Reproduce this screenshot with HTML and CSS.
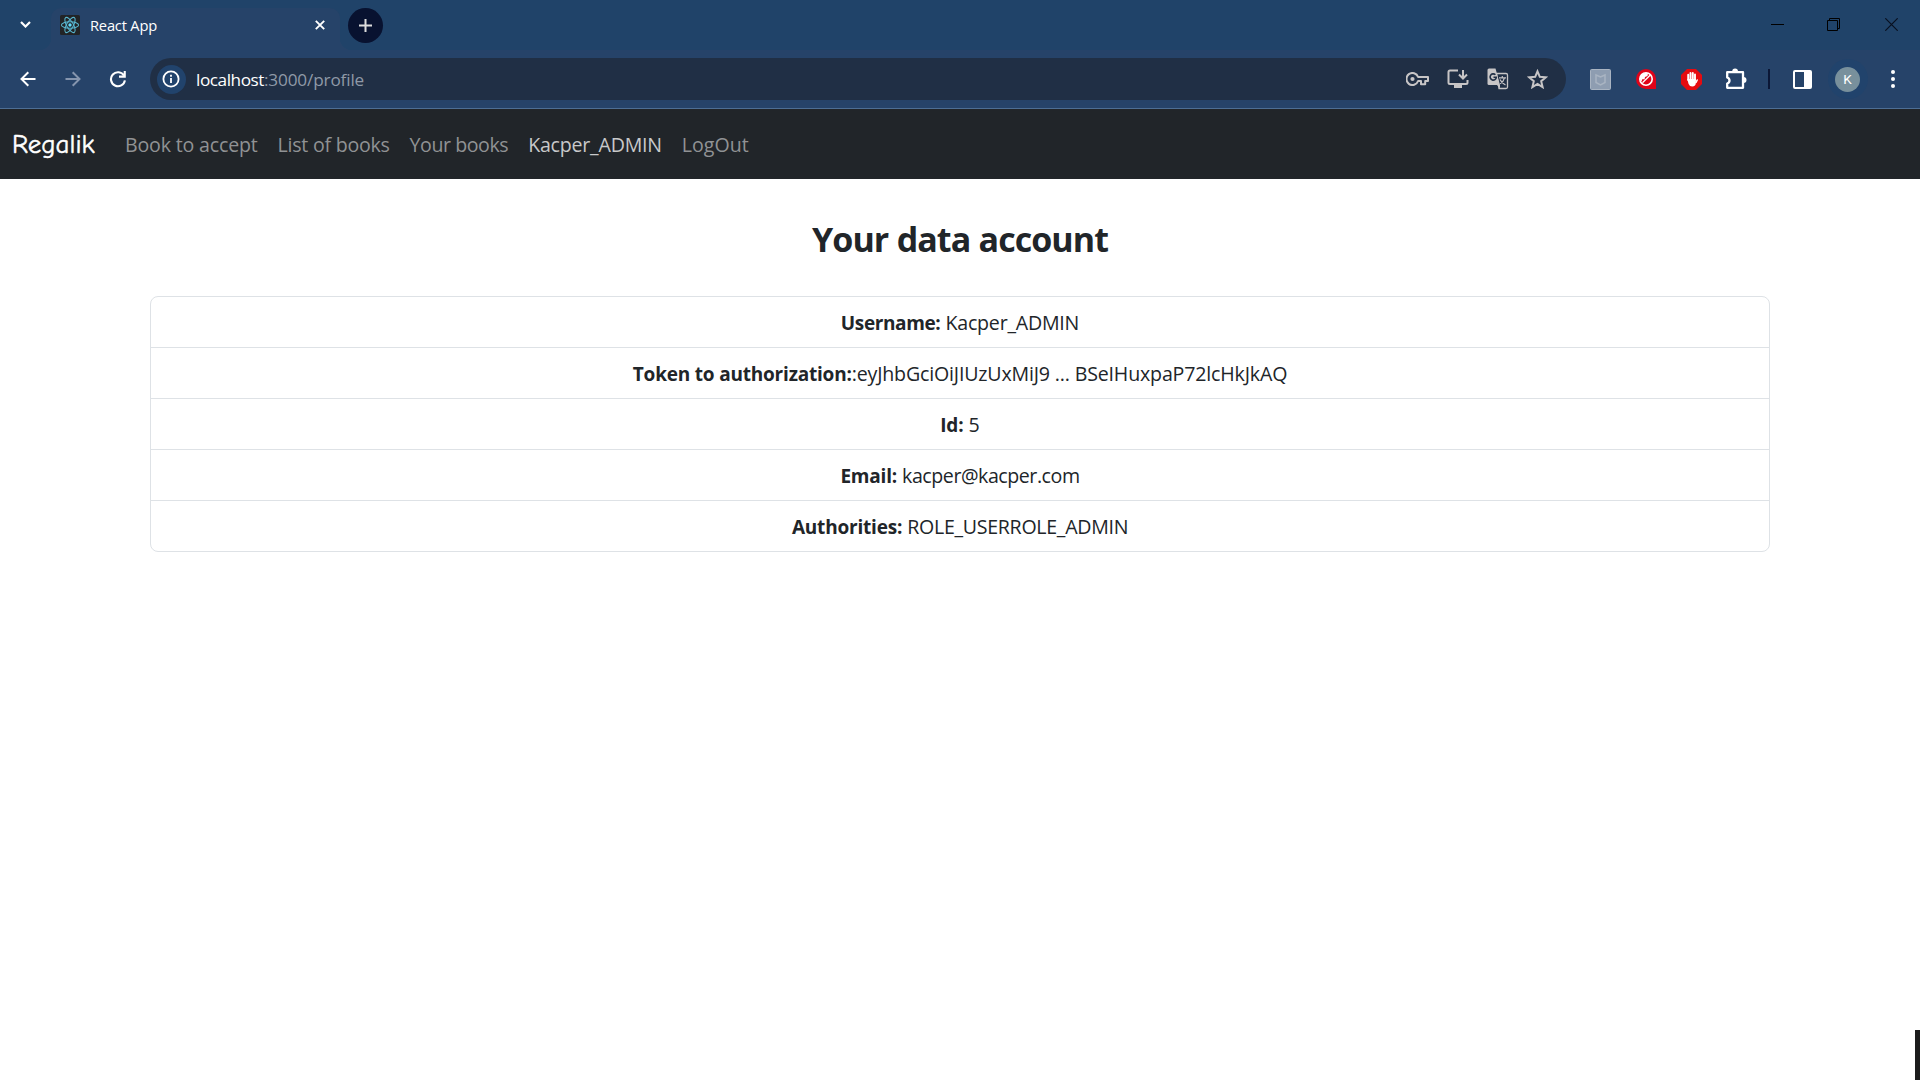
FILE: index.html
```html
<!DOCTYPE html>
<html lang="en">
<head>
<meta charset="utf-8">
<title>React App</title>
<link rel="stylesheet" href="styles.css">
</head>
<body>
<header class="browser">
  <div class="tabstrip">
    <button class="tab-search" aria-label="Search tabs"><svg width="11" height="7" viewBox="0 0 11 7"><path d="M1 1l4.500 4.500L10 1" fill="none" stroke="#fff" stroke-width="2.200"/></svg></button>
    <div class="tab">
      <svg class="favicon" width="20" height="20" viewBox="0 0 20 20"><rect width="20" height="20" rx="1.500" fill="#222426"/><g fill="none" stroke="#58b6cf" stroke-width="1.050"><ellipse cx="10" cy="10" rx="8.600" ry="3.300"/><ellipse cx="10" cy="10" rx="8.600" ry="3.300" transform="rotate(60 10 10)"/><ellipse cx="10" cy="10" rx="8.600" ry="3.300" transform="rotate(120 10 10)"/></g><circle cx="10" cy="10" r="1.700" fill="#61dafb"/></svg>
      <span class="tab-title">React App</span>
      <svg class="tab-close" width="10" height="10" viewBox="0 0 10 10"><path d="M.8.8l8.400 8.400M9.200.8L.8 9.200" stroke="#fff" stroke-width="1.900"/></svg>
    </div>
    <button class="new-tab" aria-label="New tab"><svg width="13" height="13" viewBox="0 0 13 13"><path d="M6.500 0v13M0 6.500h13" stroke="#ddd" stroke-width="2"/></svg></button>
    <div class="window-controls">
      <svg width="13" height="13" viewBox="0 0 13 13"><path d="M0 6.500h13" stroke="#000"/></svg>
      <svg width="13" height="13" viewBox="0 0 13 13"><path d="M.5 2.500h10v10H.5zM2.500 2.500v-2h10v10h-2" fill="none" stroke="#000"/></svg>
      <svg width="13" height="13" viewBox="0 0 13 13"><path d="M.3.3l12.400 12.400M12.700.3L.3 12.700" stroke="#081020" stroke-width="1.200"/></svg>
    </div>
  </div>
  <div class="toolbar">
    <div class="slots">
      <svg width="16" height="16" viewBox="0 0 16 16"><path d="M15.500 8H2M8.300 1.200L1.500 8l6.800 6.800" fill="none" stroke="#fff" stroke-width="2"/></svg>
      <svg width="16" height="16" viewBox="0 0 16 16"><path d="M.5 8H14M7.700 1.200L14.500 8l-6.800 6.800" fill="none" stroke="#8595ae" stroke-width="2"/></svg>
      <svg width="18" height="18" viewBox="0 0 18 18"><path d="M15 5.600A7 7 0 1 0 15.900 10.300" fill="none" stroke="#fff" stroke-width="2.100"/><path d="M16.800 1v6.700H10V5.600h4.700V1z" fill="#fff"/></svg>
    </div>
    <div class="omnibox">
      <span class="site-info"><svg width="18" height="18" viewBox="0 0 18 18"><circle cx="9" cy="9" r="7.600" fill="none" stroke="#fff" stroke-width="1.800"/><path d="M9 8v5M9 4.800v1.900" stroke="#fff" stroke-width="1.800"/></svg></span>
      <span class="url"><span class="host">localhost</span><span class="path">:3000/profile</span></span>
      <div class="omni-icons">
        <svg width="23" height="14" viewBox="0 0 23 14"><path d="M12.100 5A6 6 0 1 0 12.100 9H15v3.200h4.200V9H22V5z" fill="none" stroke="#c7c5c6" stroke-width="2" stroke-linejoin="round"/><circle cx="6.500" cy="7" r="2.100" fill="#c7c5c6"/></svg>
        <svg width="22" height="20" viewBox="0 0 22 20"><path d="M11 1.500H3Q1.500 1.500 1.500 3v10.500Q1.500 15 3 15h16q1.500 0 1.500-1.500V11" fill="none" stroke="#c7c5c6" stroke-width="2"/><path d="M7 15h8v4H7z" fill="#c7c5c6"/><path d="M16 1v8M12 5.500l4 4 4-4" fill="none" stroke="#c7c5c6" stroke-width="2"/></svg>
        <svg width="22" height="22" viewBox="0 0 22 22"><path d="M9.500 5.500H19q1.500 0 1.500 1.500v12q0 1.500-1.500 1.500h-7L9.500 5.500z" fill="none" stroke="#c7c5c6" stroke-width="1.300"/><path d="M2 .5h6.500L13 17H2Q.5 17 .5 15.500V2Q.5.500 2 .5z" fill="#c7c5c6"/><path d="M10 17h3v3.500z" fill="#c7c5c6"/><path d="M8.400 6.800a3.100 3.100 0 1 0 .9 2.400H6.500" fill="none" stroke="#202f45" stroke-width="1.600"/><path d="M12 9.800h7M15.300 8v1.800M17.500 9.800q-1 4-4.500 6M13 11.500q1.500 3.500 5.500 5.500" fill="none" stroke="#c7c5c6" stroke-width="1.200"/></svg>
        <svg width="21" height="20" viewBox="0 0 21 20"><path d="M10.500 2.300l2.300 5.500 6 .5-4.600 3.900 1.400 5.900-5.100-3.200-5.100 3.200 1.400-5.900-4.600-3.900 6-.5z" fill="none" stroke="#c7c5c6" stroke-width="2"/></svg>
      </div>
    </div>
    <div class="slots extensions">
      <svg width="21" height="21" viewBox="0 0 21 21"><rect x=".5" y=".5" width="20" height="20" rx="1" fill="#8e9db1" stroke="#a9b4c2"/><path d="M6 6l4.500 2L15 6v7.500L10.500 16 6 13.500z" fill="none" stroke="#a9b4c2" stroke-width="1.500"/></svg>
      <svg width="20" height="20" viewBox="0 0 20 20"><path d="M10 0a10 10 0 0 1 10 10v10H10A10 10 0 0 1 10 0z" fill="#df0319"/><circle cx="10" cy="10" r="6.200" fill="none" stroke="#fff" stroke-width="1.600"/><path d="M4 10.500A6 6 0 0 1 12 4.300L11.500 7 9 8l-.5 2.500-2-.5-1 2.500z" fill="#fff"/><path d="M14.300 6L6.500 13.800" stroke="#fff" stroke-width="1.300"/></svg>
      <svg width="21" height="21" viewBox="0 0 21 21"><path d="M6 0h9l6 6v9l-6 6H6l-6-6V6z" fill="#e60b10"/><path d="M7.200 11V5.800M9.500 10V4M11.800 10V4M14 11V5.500" stroke="#fff" stroke-width="1.900" stroke-linecap="round"/><path d="M6.300 10h8.600v3.500q0 4-3.800 4-2.500 0-3.500-2.500z" fill="#fff"/><path d="M15 13.500l1.200-2.500" stroke="#fff" stroke-width="1.600" stroke-linecap="round"/></svg>
      <svg width="22" height="22" viewBox="0 0 22 22"><path d="M2.200 4.200H18v15.600H2.200v-4.300q2.300-.7 2.300-3t-2.300-3z" fill="none" stroke="#fff" stroke-width="2.300" stroke-linejoin="round"/><path d="M7.200 3.500a2.900 2.900 0 0 1 5.800 0zM18.500 9a3 3 0 0 1 0 6z" fill="#fff"/></svg>
    </div>
    <span class="divider"></span>
    <div class="slots">
      <svg width="19" height="19" viewBox="0 0 19 19"><rect x="1" y="1" width="17" height="17" rx="1" fill="none" stroke="#fff" stroke-width="2"/><path d="M11 1h7v17h-7z" fill="#fff"/></svg>
      <span class="profile"><span class="avatar">K</span></span>
      <svg width="4" height="18" viewBox="0 0 4 18"><g fill="#fff"><circle cx="2" cy="2" r="2"/><circle cx="2" cy="9" r="2"/><circle cx="2" cy="16" r="2"/></g></svg>
    </div>
  </div>
</header>
<nav class="navbar">
  <a class="brand">Regalik</a>
  <a class="nav-link book-accept">Book to accept</a>
  <a class="nav-link book-list">List of books</a>
  <a class="nav-link own-books">Your books</a>
  <a class="nav-link user">Kacper_ADMIN</a>
  <a class="nav-link">LogOut</a>
</nav>
<main class="container">
  <h1>Your data account</h1>
  <ul class="list">
    <li><b class="k-user">Username:</b> <span class="v-user">Kacper_ADMIN</span></li>
    <li><b class="k-token">Token to authorization:</b><span class="v-token">:eyJhbGciOiJIUzUxMiJ9 ... BSeIHuxpaP72lcHkJkAQ</span></li>
    <li><b>Id:</b> <span>5</span></li>
    <li><b>Email:</b> <span class="v-email">kacper@kacper.com</span></li>
    <li><b>Authorities:</b> <span class="v-roles">ROLE_USERROLE_ADMIN</span></li>
  </ul>
</main>
<div class="edge-handle"></div>
</body>
</html>
```
FILE: styles.css
```css
* { box-sizing: border-box; }

body {
  margin: 0;
  height: 1080px;
  overflow: hidden;
  background: #fff;
  color: #212529;
  font-family: "Segoe UI", "Open Sans", sans-serif;
}

svg { display: block; flex: none; }
button { border: 0; padding: 0; background: none; }

/* Browser chrome */
.browser {
  height: 109px;
  background: #264369;
  border-bottom: 1px solid #4d6e94;
}

.tabstrip {
  display: flex;
  height: 50px;
  background: #204369;
}

.tab-search {
  width: 51px;
  height: 49px;
  display: flex;
  align-items: center;
  justify-content: center;
}

.tab {
  position: relative;
  display: flex;
  align-items: center;
  width: 289px;
  height: 42px;
  margin-top: 8px;
  padding: 0 15px 8px 9px;
  border-radius: 10px 10px 0 0;
  background: #264369;
}

.tab::before,
.tab::after {
  content: "";
  position: absolute;
  bottom: 0;
  width: 12px;
  height: 12px;
}
.tab::before { left: -12px; background: radial-gradient(circle at 0 0, transparent 12px, #264369 12.5px); }
.tab::after { right: -12px; background: radial-gradient(circle at 100% 0, transparent 12px, #264369 12.5px); }

.tab-title {
  margin-left: 10px;
  color: #fff;
  font-size: 14.7px;
  letter-spacing: -0.2px;
}

.tab-close { margin-left: auto; }

.new-tab {
  display: flex;
  align-items: center;
  justify-content: center;
  width: 35px;
  height: 35px;
  margin: 8px 0 0 8px;
  border-radius: 50%;
  background: #081230;
}

.window-controls {
  display: flex;
  gap: 45px;
  margin: 18px 22px 0 auto;
}
.window-controls svg:first-child { margin-right: -2px; }

.toolbar {
  display: flex;
  align-items: center;
  height: 58px;
  padding: 0 5px;
}

.slots {
  display: grid;
  grid-auto-flow: column;
  grid-auto-columns: 45px;
  justify-items: center;
  align-items: center;
}

.omnibox {
  display: flex;
  align-items: center;
  width: 1417px;
  height: 42px;
  margin-left: 10px;
  padding: 0 8px 0 7px;
  border-radius: 21px;
  background: #202f45;
}

.site-info {
  display: flex;
  align-items: center;
  justify-content: center;
  width: 29px;
  height: 29px;
  padding-right: 1px;
  border-radius: 50%;
  background: #21436c;
}

.url { margin-left: 10px; font-size: 17.2px; }
.host { color: #fff; letter-spacing: -0.45px; }
.path { color: #8f99a7; letter-spacing: -0.15px; }

.omni-icons {
  display: grid;
  grid-template-columns: repeat(4, 40px);
  justify-items: center;
  align-items: center;
  margin-left: auto;
}

.extensions { grid-auto-columns: 45.3px; margin-left: 12px; }

.divider {
  width: 2px;
  height: 20px;
  margin: 0 10px 0 9px;
  background: #0b1736;
}

.profile {
  display: flex;
  align-items: center;
  justify-content: center;
  width: 40px;
  height: 40px;
  border-radius: 50%;
  background: #21436c;
}

.avatar {
  width: 25px;
  height: 25px;
  border-radius: 50%;
  background: #78909c;
  color: #fff;
  font: 13.5px/25px Roboto, sans-serif;
  text-align: center;
}

/* Site navigation */
.navbar {
  display: flex;
  align-items: center;
  height: 70px;
  padding: 1px 0 0 12px;
  background: #212529;
}

.brand {
  width: 103px;
  color: #fff;
  font-family: "Comic Neue", "Comic Sans MS", cursive;
  font-size: 27px;
  -webkit-text-stroke: 0.5px #fff;
}

.nav-link {
  padding: 0 10px;
  color: #909294;
  font-size: 19.6px;
  white-space: nowrap;
}
.book-accept { letter-spacing: -0.18px; }
.book-list { letter-spacing: -0.25px; }
.own-books { letter-spacing: -0.45px; }
.user { color: #c8c9ca; letter-spacing: -0.22px; }

/* Account details */
.container { width: 1620px; margin: 0 auto; }

h1 {
  margin: 36px 0 32px;
  font-size: 34px;
  line-height: 49px;
  letter-spacing: -0.95px;
  word-spacing: 0.5px;
  text-align: center;
}

.list {
  margin: 0;
  padding: 0;
  list-style: none;
  border: 1px solid #dee2e6;
  border-radius: 8px;
}

.list li {
  height: 51px;
  border-bottom: 1px solid #dee2e6;
  font-size: 19.6px;
  line-height: 51px;
  text-align: center;
}
.list li:last-child { height: 50px; border-bottom: 0; }

.list b { font-size: 19px; letter-spacing: -0.2px; }
.list .k-user { letter-spacing: -0.38px; }
.list .k-token { letter-spacing: -0.2px; }
.v-user { letter-spacing: -0.22px; }
.v-token { letter-spacing: -0.17px; }
.v-email { letter-spacing: -0.45px; }
.v-roles { letter-spacing: -0.3px; }

.edge-handle {
  position: absolute;
  right: 0;
  bottom: 0;
  width: 5px;
  height: 50px;
  background: #1c1c1c;
}
```
